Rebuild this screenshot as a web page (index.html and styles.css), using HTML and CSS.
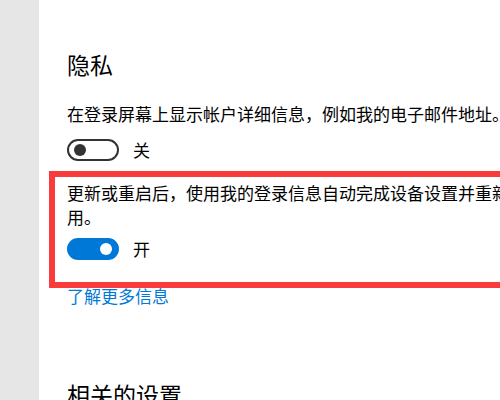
FILE: index.html
```html
<!DOCTYPE html>
<html>
<head>
    <meta charset="utf-8">
    <meta name="viewport" content="width=device-width, initial-scale=1.0">
    <title>登录选项</title>
    <link rel="stylesheet" href="styles.css">
</head>
<body>
    <div class="page">
        <aside class="sidebar"></aside>

        <main class="content">
            <section class="group">
                <h2 class="group-title">隐私</h2>

                <div class="setting">
                    <p class="setting-desc">在登录屏幕上显示帐户详细信息，例如我的电子邮件地址。</p>
                    <div class="toggle-row">
                        <span class="toggle"></span>
                        <span class="toggle-label">关</span>
                    </div>
                </div>

                <div class="setting highlighted">
                    <p class="setting-desc">更新或重启后，使用我的登录信息自动完成设备设置并重新启用。</p>
                    <div class="toggle-row">
                        <span class="toggle on"></span>
                        <span class="toggle-label">开</span>
                    </div>
                </div>

                <a class="more-link" href="#">了解更多信息</a>
            </section>

            <section class="group">
                <h2 class="group-title">相关的设置</h2>
            </section>
        </main>
    </div>
</body>
</html>
```

FILE: styles.css
```css
body {
    margin: 0;
    font-family: "Noto Sans CJK SC", "Noto Sans", sans-serif;
    color: #000;
    background: #fff;
    overflow: hidden;
}
.page {
    display: flex;
    height: 400px;
}
.sidebar {
    flex: none;
    width: 39px;
    background: #e6e6e6;
}
.content {
    flex: none;
    width: 470px;
    padding: 49px 0 0 28px;
}
.group-title {
    margin: 0 0 23px;
    font-size: 23px;
    line-height: 30px;
    font-weight: normal;
}
.setting {
    position: relative;
}
.setting + .setting {
    margin-top: 19px;
}
.setting-desc {
    margin: 0;
    font-size: 17px;
    line-height: 24px;
}
.toggle-row {
    display: flex;
    align-items: center;
    gap: 14px;
    margin-top: 12px;
}
.highlighted .toggle-row {
    margin-top: 8px;
}
.toggle {
    box-sizing: border-box;
    display: flex;
    align-items: center;
    width: 52px;
    height: 22px;
    padding: 0 5px;
    border: 2px solid #333;
    border-radius: 11px;
}
.toggle::before {
    content: "";
    width: 12px;
    height: 12px;
    border-radius: 50%;
    background: #333;
}
.toggle.on {
    justify-content: flex-end;
    background: #0078d7;
    border-color: #0078d7;
}
.toggle.on::before {
    background: #fff;
}
.toggle-label {
    font-size: 17px;
    line-height: 24px;
}
/* red annotation frame drawn over the screenshot */
.highlighted::after {
    content: "";
    position: absolute;
    top: -10px;
    left: -18px;
    right: -60px;
    bottom: -27px;
    border: 6px solid #f93b3b;
}
.more-link {
    display: block;
    margin-top: 23px;
    font-size: 17px;
    line-height: 24px;
    color: #0078d7;
    text-decoration: none;
}
.group + .group {
    margin-top: 71px;
}
```
